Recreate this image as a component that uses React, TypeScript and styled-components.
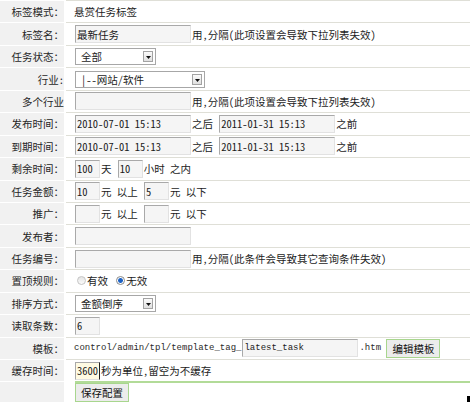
import styled, { createGlobalStyle } from "styled-components";

const GlobalStyle = createGlobalStyle`
  html, body {
    margin: 0;
    padding: 0;
    background: #fff;
  }
  body {
    font-family: "Noto Sans Mono CJK SC", "Noto Sans CJK SC", sans-serif;
    font-size: 10.5px;
    color: #1c1c1c;
  }
`;

const FormTable = styled.div`
  width: 470px;
  overflow: hidden;
`;

const Row = styled.div`
  display: grid;
  grid-template-columns: 64px 1fr;
  column-gap: 2px;
  height: 22.45px;
  box-sizing: border-box;
`;

const Label = styled.div`
  background: #f1f1f1;
  border-top: 1px solid #fff;
  display: flex;
  align-items: center;
  justify-content: flex-end;
  white-space: nowrap;
  color: #262626;
`;

const Field = styled.div`
  border-top: 1px solid #dfdfd7;
  display: flex;
  align-items: center;
  padding-left: 8px;
  white-space: pre;
`;

const TextInput = styled.input<{ $w?: number; $code?: boolean; $active?: boolean }>`
  box-sizing: border-box;
  width: ${(p) => p.$w ?? 116}px;
  height: 18px;
  margin: 0 1px;
  padding: 0 1px;
  border: 1px solid;
  border-color: #a9a9a9 #e2e2e2 #e2e2e2 #a9a9a9;
  border-right-color: ${(p) => (p.$active ? "#222" : "#e2e2e2")};
  background: ${(p) => (p.$active ? "#fffbe3" : "#f5f5f5")};
  font: inherit;
  color: #1a1a1a;
  outline: none;
  ${(p) => p.$code && `font-family: "Liberation Mono", monospace; font-size: 9px;`}
`;

const SelectBox = styled.div<{ $w: number }>`
  box-sizing: border-box;
  width: ${(p) => p.$w}px;
  height: 17px;
  margin: 0 1px;
  padding: 0 2px 0 5px;
  border: 1px solid #a7a7a7;
  background: #fff;
  display: flex;
  align-items: center;
`;

const SelectText = styled.span`
  flex: 1;
`;

const SelectArrow = styled.span`
  box-sizing: border-box;
  width: 10px;
  height: 11px;
  border: 1px solid #a3a3a3;
  background: linear-gradient(#fbfbfb, #e0e0e0);
  display: flex;
  align-items: flex-end;
  justify-content: center;
  padding-bottom: 2px;
`;

const Radio = styled.span<{ $on?: boolean }>`
  box-sizing: border-box;
  width: 9px;
  height: 9px;
  margin: 0 1px 0 3px;
  border-radius: 50%;
  border: 1px solid ${(p) => (p.$on ? "#8a8a8a" : "#c4c4c4")};
  background: ${(p) =>
    p.$on
      ? "radial-gradient(circle, #1d62c4 0 2px, #9fc1ec 2.5px, #fff 3px)"
      : "linear-gradient(#e4e4e4, #fbfbfb)"};
`;

const CodeText = styled.span`
  font-family: "Liberation Mono", monospace;
  font-size: 9px;
  color: #2a2a2a;
`;

const Button = styled.button`
  box-sizing: border-box;
  height: 19px;
  margin: 0;
  padding: 0 5px;
  border: 1px solid #a8d68e;
  background: #ececec;
  font: inherit;
  color: #111;
  cursor: pointer;
`;

const FooterRow = styled(Row)`
  height: 21px;
`;

const FooterField = styled.div`
  padding-left: 9px;
  display: flex;
`;

const FooterBar = styled.div`
  flex: 1;
  border-top: 2px solid #b2db98;
  display: flex;
  align-items: flex-start;
`;

const CornerMark = styled.span`
  width: 3px;
  height: 6px;
  margin-left: auto;
  align-self: flex-end;
  background: #000;
`;

const Arrow = () => (
  <svg width="5" height="3" viewBox="0 0 5 3">
    <path d="M0 0h5L2.5 3z" fill="#111" />
  </svg>
);

const Select = ({ value, width }: { value: string; width: number }) => (
  <SelectBox $w={width}>
    <SelectText>{value}</SelectText>
    <SelectArrow>
      <Arrow />
    </SelectArrow>
  </SelectBox>
);

export default function App() {
  return (
    <>
      <GlobalStyle />
      <FormTable>
        <Row>
          <Label>标签模式：</Label>
          <Field>悬赏任务标签</Field>
        </Row>
        <Row>
          <Label>标签名：</Label>
          <Field>
            <TextInput defaultValue="最新任务" />用,分隔(此项设置会导致下拉列表失效)
          </Field>
        </Row>
        <Row>
          <Label>任务状态：</Label>
          <Field>
            <Select value="全部" width={81} />
          </Field>
        </Row>
        <Row>
          <Label>行业:</Label>
          <Field>
            <Select value="|--网站/软件" width={130} />
          </Field>
        </Row>
        <Row>
          <Label>多个行业</Label>
          <Field>
            <TextInput defaultValue="" />用,分隔(此项设置会导致下拉列表失效)
          </Field>
        </Row>
        <Row>
          <Label>发布时间：</Label>
          <Field>
            <TextInput defaultValue="2010-07-01 15:13" />之后 <TextInput defaultValue="2011-01-31 15:13" />之前
          </Field>
        </Row>
        <Row>
          <Label>到期时间：</Label>
          <Field>
            <TextInput defaultValue="2010-07-01 15:13" />之后 <TextInput defaultValue="2011-01-31 15:13" />之前
          </Field>
        </Row>
        <Row>
          <Label>剩余时间：</Label>
          <Field>
            <TextInput $w={25} defaultValue="100" />天 <TextInput $w={25} defaultValue="10" />小时 之内
          </Field>
        </Row>
        <Row>
          <Label>任务金额：</Label>
          <Field>
            <TextInput $w={25} defaultValue="10" />元 以上 <TextInput $w={25} defaultValue="5" />元 以下
          </Field>
        </Row>
        <Row>
          <Label>推广：</Label>
          <Field>
            <TextInput $w={25} defaultValue="" />元 以上 <TextInput $w={25} defaultValue="" />元 以下
          </Field>
        </Row>
        <Row>
          <Label>发布者：</Label>
          <Field>
            <TextInput defaultValue="" />
          </Field>
        </Row>
        <Row>
          <Label>任务编号：</Label>
          <Field>
            <TextInput defaultValue="" />用,分隔(此条件会导致其它查询条件失效)
          </Field>
        </Row>
        <Row>
          <Label>置顶规则：</Label>
          <Field>
            <Radio />有效 <Radio $on />无效
          </Field>
        </Row>
        <Row>
          <Label>排序方式：</Label>
          <Field>
            <Select value="金额倒序" width={81} />
          </Field>
        </Row>
        <Row>
          <Label>读取条数：</Label>
          <Field>
            <TextInput $w={25} defaultValue="6" />
          </Field>
        </Row>
        <Row>
          <Label>模板：</Label>
          <Field>
            <CodeText>control/admin/tpl/template_tag_</CodeText>
            <TextInput $code defaultValue="latest_task" />
            <CodeText>.htm </CodeText>
            <Button>编辑模板</Button>
          </Field>
        </Row>
        <Row>
          <Label>缓存时间：</Label>
          <Field>
            <TextInput $w={25} $active defaultValue="3600" />秒为单位,留空为不缓存
          </Field>
        </Row>
        <FooterRow>
          <Label />
          <FooterField>
            <FooterBar>
              <Button>保存配置</Button>
              <CornerMark />
            </FooterBar>
          </FooterField>
        </FooterRow>
      </FormTable>
    </>
  );
}
